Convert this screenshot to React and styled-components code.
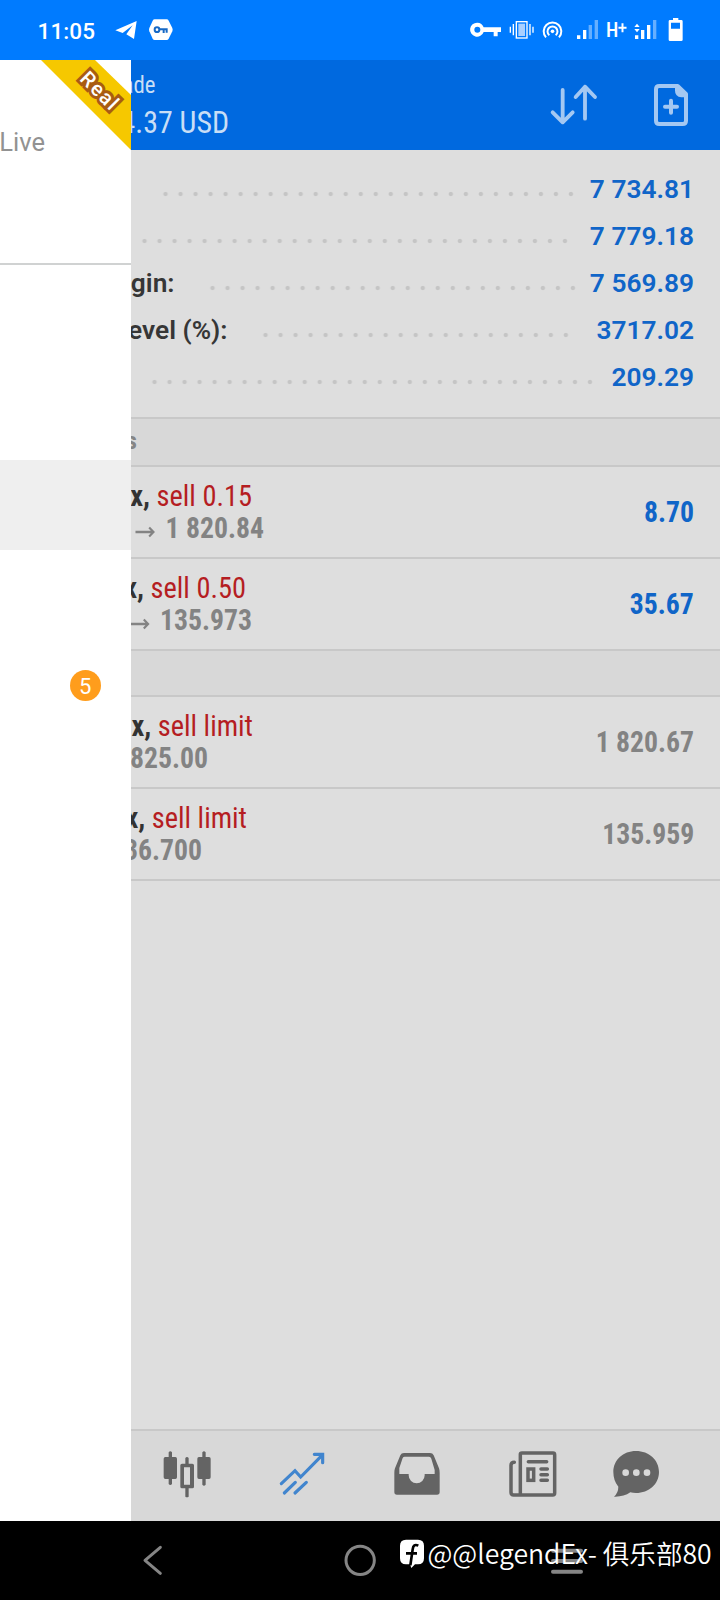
import React from "react";
import styled, { createGlobalStyle } from "styled-components";

const Global = createGlobalStyle`
  * { box-sizing: border-box; }
  body { margin: 0; background: #fff; font-family: Roboto, "Noto Sans CJK SC", sans-serif; }
`;

const Phone = styled.div`
  width: 720px; height: 1600px; overflow: hidden;
  display: flex; flex-direction: column;
`;
const StatusBar = styled.header`
  height: 60px; flex: none; background: #007bff; color: #fff;
  display: flex; align-items: center; padding: 0 37.33px 0 37.5px;
`;
const Clock = styled.span`
  font-size: 22.5px; font-weight: 500; line-height: 26px; letter-spacing: 0.1px;
  width: 77.17px; padding-top: 1px;
`;
const Spacer = styled.span` flex: 1; `;
const Glyph = styled.svg`
  display: block; flex: none; overflow: visible;
  margin-left: ${(p) => p.$gap || 0}px;
`;
const Network = styled.span`
  font-size: 20px; line-height: 24px; width: 21.33px; margin-left: 7.33px;
  font-family: "Roboto Condensed", Roboto, sans-serif; font-weight: 500;
  display: flex; align-items: center;
`;

const Body = styled.div` flex: 1; display: flex; min-height: 0; `;
const Drawer = styled.aside`
  width: 131px; flex: none; background: #fff; position: relative;
  display: flex; flex-direction: column;
`;
const Account = styled.div`
  height: 205px; border-bottom: 2px solid #d0d2d2; padding-top: 67px;
  color: #929292; font-size: 25.5px; line-height: 30px;
  display: flex; justify-content: flex-end; padding-right: 86px; white-space: nowrap;
`;
const MenuItem = styled.div`
  height: 90px; background: ${(p) => (p.$active ? "#efefef" : "#fff")};
  margin-top: ${(p) => p.$top || 0}px;
  display: flex; align-items: center; justify-content: flex-end; padding-right: 30px;
`;
const Badge = styled.span`
  width: 31.5px; height: 31.5px; border-radius: 50%; background: #ff9d1c; color: #fff;
  font-size: 22px; line-height: 33px; text-align: center;
`;
const Ribbon = styled.div`
  position: absolute; top: 0; right: 0; width: 90px; height: 90px; background: #f6c800;
  clip-path: polygon(0 0, 54px 0, 100% 35px, 100% 100%);
`;
const RibbonText = styled.span`
  position: absolute; left: 75px; top: 18.5px; width: 50px; line-height: 24px; text-align: center;
  transform: rotate(45deg); font-size: 20.5px; font-weight: 500; letter-spacing: 1.4px; color: #fff;
  -webkit-text-stroke: 6px #a95c12; paint-order: stroke fill; stroke-linejoin: round;
`;

const Panel = styled.main`
  flex: 1; min-width: 0; overflow: hidden; background: #dedede;
  display: flex; flex-direction: column;
`;
const TitleBar = styled.div`
  height: 90px; flex: none; background: #0069df; color: #c8def6;
  display: flex; align-items: center;
`;
const Titles = styled.div` width: 300px; height: 90px; flex: none; padding-top: 11px; `;
const Condensed = styled.div`
  width: ${(p) => p.$end}px; display: flex; justify-content: flex-end; align-items: baseline;
  white-space: pre; font-family: "Roboto Condensed", Roboto, sans-serif;
  font-size: ${(p) => p.$size || 29.3}px; line-height: ${(p) => p.$line || 32}px;
  font-weight: ${(p) => p.$weight || 400};
  color: ${(p) => p.$color || "inherit"};
  transform: scaleX(${(p) => p.$narrow || 1}); transform-origin: 100% 50%;
`;

const Summary = styled.section`
  height: 269px; flex: none; border-bottom: 2px solid #c8c8c8; padding: 15px 26px 0 0;
`;
const SummaryRow = styled.div`
  height: 47px; display: flex; align-items: center; font-size: 26.3px; font-weight: 600;
`;
const Label = styled.span`
  width: ${(p) => p.$width}px; flex: none; color: #363636;
  display: flex; white-space: pre;
`;
const LabelText = styled.span`
  display: flex; justify-content: flex-end; flex: none; width: ${(p) => p.$end}px;
`;
const Dots = styled.span`
  height: 6px; width: ${(p) => p.$count * 15.03}px; flex: none; margin-top: 11px;
  background: radial-gradient(circle at 50% 50%, #c5c5c5 1.7px, transparent 2.6px) 0 0 / 15.03px 6px repeat-x;
`;
const Amount = styled.span` margin-left: auto; color: #1065c8; font-weight: 650; `;

const Section = styled.h2`
  margin: 0; flex: none; height: ${(p) => p.$height}px; background: #d8d8d8;
  border-bottom: 2px solid #c8c8c8; color: #858585; padding-top: 6px;
`;
const Deal = styled.article`
  height: 92px; flex: none; border-bottom: 2px solid #c8c8c8;
  display: flex; align-items: center; justify-content: space-between; padding-right: 26px;
`;
const Symbol = styled.b` color: #333; font-weight: 700; `;
const Side = styled.span` color: #b51d22; `;

const Tabs = styled.nav`
  margin-top: auto; height: 92px; flex: none; background: #d8d8d8; border-top: 2px solid #c8c8c8;
  display: flex; color: #646464;
`;
const SystemBar = styled.footer`
  height: 79px; flex: none; background: #000; position: relative; display: flex; color: #858585;
`;
const Watermark = styled.div`
  position: absolute; left: 399px; top: 14px; display: flex; align-items: center; color: #fff;
  white-space: pre; font-family: "Noto Sans CJK SC", sans-serif; font-size: 26.6px; line-height: 36px;
`;
const Handle = styled.span` margin-left: 2.5px; font-weight: 350; `;

const BLUE = "#1065c8";
const GRAY = "#838383";

const summary = [
  { label: "", end: 0, width: 27, count: 28, value: "7 734.81" },
  { label: "", end: 0, width: 6, count: 29, value: "7 779.18" },
  { label: "gin:", end: 43.5, width: 74, count: 25, value: "7 569.89" },
  { label: "evel (%):", end: 96.5, width: 127, count: 21, value: "3717.02" },
  { label: "", end: 0, width: 16, count: 30, value: "209.29" },
];

const Arrow = () => (
  <Glyph width="21" height="13" viewBox="0 0 21 13" fill="none" stroke="currentColor" strokeWidth="2.3">
    <path d="M0 7H19M14.5 2.5L19 7L14.5 11.5" />
  </Glyph>
);

const Price = styled.span` margin-left: ${(p) => p.$gap}px; `;

function DealRow({ end, side, detail, detailEnd, arrow, value, color }) {
  return (
    <Deal>
      <div>
        <Condensed $end={end} $narrow={0.97}><Symbol>x, </Symbol><Side>{side}</Side></Condensed>
        <Condensed $end={detailEnd} $weight={700} $color={GRAY} $narrow={0.945}>
          {arrow && <Arrow />}
          <Price $gap={arrow ? 10.5 : 0}>{detail}</Price>
        </Condensed>
      </div>
      <Condensed $weight={700} $color={color} $narrow={0.945}>{value}</Condensed>
    </Deal>
  );
}

function StatusIcons() {
  return (
    <>
      <Glyph width="32" height="60" viewBox="60 0 96 180" fill="#fff">
        <path fillRule="evenodd" d="M82 68a21 21 0 1 0 19 28H131V109H143V96H153V82H101A21 21 0 0 0 82 68ZM82 80a9 9 0 1 1 0 18a9 9 0 1 1 0-18Z" />
      </Glyph>
      <Glyph $gap={7.33} width="25.33" height="60" viewBox="178 0 76 180" fill="none" stroke="#fff" strokeWidth="4">
        <rect x="200" y="65" width="32" height="49" /><rect x="206" y="71" width="20" height="37" fill="#a9d0ff" stroke="none" />
        <path d="M191 72V106M182 80V98M241 72V106M250 80V98" />
      </Glyph>
      <Glyph $gap={7.33} width="20.67" height="60" viewBox="276 0 62 180" fill="none" stroke="#fff" strokeWidth="6">
        <circle cx="307.500" cy="94" r="5.500" fill="#fff" stroke="none" />
        <path d="M298 106A15 15 0 1 1 317 106M288 112A26.500 26.500 0 1 1 327 112" />
      </Glyph>
      <Glyph $gap={13.33} width="22.67" height="60" viewBox="378 0 68 180" fill="#fff">
        <path d="M381 106h10v11h-10zM399 90h10v27h-10z" /><path opacity=".4" d="M416 75h10v42h-10zM434 60h10v57h-10z" />
      </Glyph>
      <Network>
        <span>H</span>
        <svg width="10" height="24" viewBox="0 0 10 24" stroke="#fff" strokeWidth="2.2"><path d="M0.500 9.500H9.500M5 4.500V14.500" /></svg>
      </Network>
      <Glyph $gap={6.67} width="22.67" height="60" viewBox="552 0 68 180" fill="#fff">
        <path d="M555 106h10v11h-10zM573 90h10v27h-10zM591 75h10v42h-10zM553 81l8-10l8 10zM553 87l8 10l8-10z" />
        <path opacity=".4" d="M609 60h10v57h-10z" />
      </Glyph>
      <Glyph $gap={11.33} width="14.67" height="60" viewBox="654 0 44 180" fill="#fff">
        <path fillRule="evenodd" d="M669 54h16v6h9q4 0 4 4v55q0 4-4 4h-34q-4 0-4-4V64q0-4 4-4h9zM663 68v18h27V68z" />
      </Glyph>
    </>
  );
}

export default function App() {
  return (
    <Phone>
      <Global />
      <StatusBar>
        <Clock>11:05</Clock>
        <Glyph width="22" height="60" viewBox="344 0 66 180" fill="#fff">
          <path d="M345 91L409 63L401 117L378 103L397 76L367 99Z" />
        </Glyph>
        <Glyph $gap={12} width="24" height="60" viewBox="446 0 72 180">
          <path d="M463 58H499Q503 58 505 62L516 84Q518 89 516 94L505 116Q503 120 499 120H463Q459 120 457 116L447 94Q445 89 447 84L457 62Q459 58 463 58Z" fill="#fff" />
          <circle cx="470" cy="89" r="7" fill="none" stroke="#1769c5" strokeWidth="6" />
          <path d="M477 88H502M490 90V99M499 88V98" stroke="#1769c5" strokeWidth="6" />
        </Glyph>
        <Spacer />
        <StatusIcons />
      </StatusBar>

      <Body>
        <Drawer>
          <Account>Live</Account>
          <MenuItem $active $top={195} />
          <MenuItem $top={90.500}><Badge>5</Badge></MenuItem>
          <Ribbon />
          <RibbonText>Real</RibbonText>
        </Drawer>

        <Panel>
          <TitleBar>
            <Titles>
              <Condensed $end={24.500} $size={24.500} $line={27} $narrow={0.93}>ade</Condensed>
              <Condensed $end={98} $size={31.500} $line={49} $narrow={0.95}>4.37 USD</Condensed>
            </Titles>
            <Glyph $gap={119} width="48" height="90" viewBox="300 180 144 270" fill="none" stroke="#a4c8f2" strokeWidth="11.500" strokeLinecap="round" strokeLinejoin="round">
              <path d="M338 270V366M308 337L338 367L368 337M405 356V260M377 291L405 260L435 291" />
            </Glyph>
            <Glyph $gap={56} width="34" height="90" viewBox="612 180 102 270" fill="none" stroke="#a4c8f2" strokeWidth="12" strokeLinejoin="round">
              <path d="M618 268Q618 258 628 258H683L708 282V362Q708 372 698 372H628Q618 372 618 362Z" />
              <path d="M675 258H685L708 281V292H694Q675 290 675 272Z" fill="#a4c8f2" stroke="none" />
              <path d="M663 302V338M645 320H681" strokeLinecap="round" />
            </Glyph>
          </TitleBar>

          <Summary>
            {summary.map((r) => (
              <SummaryRow key={r.value}>
                <Label $width={r.width}><LabelText $end={r.end}>{r.label}</LabelText></Label>
                <Dots $count={r.count} />
                <Amount>{r.value}</Amount>
              </SummaryRow>
            ))}
          </Summary>

          <Section $height={48}><Condensed as="span" $end={6} $size={24} $weight={700}>s</Condensed></Section>
          <DealRow end={121} side="sell 0.15" arrow detail="1 820.84" detailEnd={133} value="8.70" color={BLUE} />
          <DealRow end={115} side="sell 0.50" arrow detail="135.973" detailEnd={121} value="35.67" color={BLUE} />
          <Section $height={46} />
          <DealRow end={122} side="sell limit" detail="825.00" detailEnd={77} value="1 820.67" color={GRAY} />
          <DealRow end={116} side="sell limit" detail="36.700" detailEnd={71} value="135.959" color={GRAY} />

          <Tabs>
            <Glyph $gap={32.33} width="48.33" height="90" viewBox="130 33 145 270" fill="currentColor">
              <path d="M147 97q5-6 10 0v14h10q5 0 5 5v56q0 5-5 5h-10v15q-5 6-10 0v-15h-10q-5 0-5-5v-56q0-5 5-5h10zM248 97q5-6 10 0v14h10q5 0 5 5v56q0 5-5 5h-10v17q-5 6-10 0v-17h-10q-5 0-5-5v-56q0-5 5-5h10z" />
              <path fillRule="evenodd" d="M197 114q5-6 10 0v17h11q5 0 5 5v64q0 5-5 5h-11v25q-5 4-10 0v-25h-10q-5 0-5-5v-64q0-5 5-5h10zM193 142v52h18v-52z" />
            </Glyph>
            <Glyph $gap={67.67} width="45.67" height="90" viewBox="478 33 137 270" fill="none" stroke="#4185ce" strokeWidth="9.500" strokeLinecap="round">
              <path d="M485 191L526 152L543 171L607 106M494 219L527 187M526 219L560 187" />
              <path d="M584 103H609V128" strokeWidth="9.500" />
            </Glyph>
            <Glyph $gap={69.33} width="46" height="90" viewBox="44 33 138 270" fill="currentColor">
              <path fillRule="evenodd" d="M74 99H152Q160 99 163 106L179 145Q181 150 181 158V216Q181 224 173 224H53Q45 224 45 216V158Q45 150 47 145L63 106Q66 99 74 99ZM76 110Q72 110 70 114L60 144V162H88V166A24 24 0 0 0 136 166V162H166V150L156 116Q154 110 149 110Z" />
            </Glyph>
            <Glyph $gap={69} width="48" height="90" viewBox="388 33 144 270" fill="none" stroke="currentColor" strokeWidth="10.500" strokeLinecap="round">
              <path d="M422 103Q422 99 427 99H520Q525 99 525 104V219Q525 225 519 225H402Q394 225 394 217V136Q394 127 404 127M422 103V223" />
              <path d="M446 125H501M484 147H503M484 164H503M484 181H503" />
              <rect x="445" y="147" width="17" height="34" />
            </Glyph>
            <Glyph $gap={55.33} width="46.67" height="90" viewBox="698 33 140 270" fill="currentColor">
              <path fillRule="evenodd" d="M767 93C806 93 836 120 836 156S806 219 767 219Q758 219 750 217Q730 231 701 230Q714 218 714 200Q699 182 699 156C699 120 728 93 767 93ZM736 148a10 10 0 1 0 0 20a10 10 0 1 0 0-20ZM768 148a10 10 0 1 0 0 20a10 10 0 1 0 0-20ZM800 148a10 10 0 1 0 0 20a10 10 0 1 0 0-20Z" />
            </Glyph>
          </Tabs>
        </Panel>
      </Body>

      <SystemBar>
        <Glyph $gap={143.33} width="20" height="79" viewBox="70 303 60 237" fill="none" stroke="currentColor" strokeWidth="9" strokeLinecap="round" strokeLinejoin="round">
          <path d="M122 382L76 421L122 460" />
        </Glyph>
        <Glyph $gap={181} width="32" height="79" viewBox="673 303 96 237" fill="none" stroke="currentColor" strokeWidth="9">
          <circle cx="721.500" cy="421" r="42.500" />
        </Glyph>
        <Glyph $gap={175} width="32" height="79" viewBox="514 303 96 237" stroke="currentColor" strokeWidth="12" strokeLinecap="round">
          <path d="M520 392H604M520 423H604M520 455H604" />
        </Glyph>
        <Watermark>
          <svg width="26" height="36" viewBox="57 354 78 108">
            <path d="M78 368H114Q132 368 132 386V424Q132 442 114 442H105L94 453L90 442H78Q60 442 60 424V386Q60 368 78 368Z" fill="#fff" />
            <path d="M115 386Q100 379 98 397L91 445M78 409H111" fill="none" stroke="#000" strokeWidth="8" />
          </svg>
          <Handle>@@legendEx- 俱乐部80</Handle>
        </Watermark>
      </SystemBar>
    </Phone>
  );
}
